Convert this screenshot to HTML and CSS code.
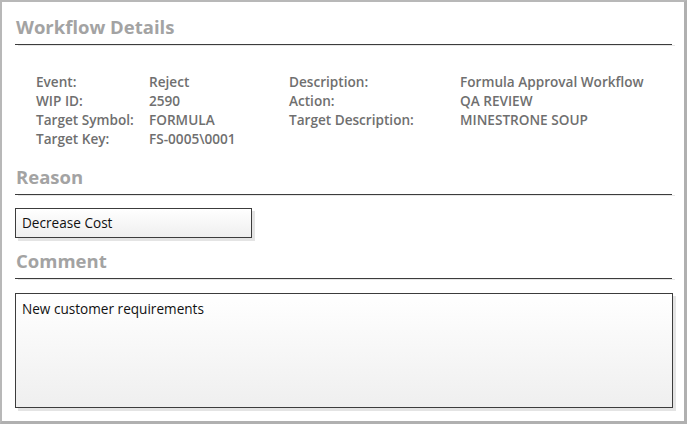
FILE: index.html
```html
<!DOCTYPE html>
<html>
<head>
<meta charset="utf-8">
<link rel="stylesheet" href="styles.css">
</head>
<body>
<div class="frame">
  <h2 class="section-title">Workflow Details</h2>
  <div class="rule"></div>
  <div class="details">
    <div class="label">Event:</div><div class="value">Reject</div>
    <div class="label">Description:</div><div class="value">Formula Approval Workflow</div>
    <div class="label">WIP ID:</div><div class="value">2590</div>
    <div class="label">Action:</div><div class="value">QA REVIEW</div>
    <div class="label">Target Symbol:</div><div class="value">FORMULA</div>
    <div class="label">Target Description:</div><div class="value">MINESTRONE SOUP</div>
    <div class="label">Target Key:</div><div class="value">FS-0005\0001</div>
  </div>
  <h2 class="section-title reason-title">Reason</h2>
  <div class="rule"></div>
  <div class="field reason-field">Decrease Cost</div>
  <h2 class="section-title comment-title">Comment</h2>
  <div class="rule"></div>
  <div class="field comment-field">New customer requirements</div>
</div>
</body>
</html>
```
FILE: styles.css
```css
html, body {
  margin: 0;
  padding: 0;
  background: #ffffff;
}
body {
  width: 687px;
  height: 424px;
  overflow: hidden;
  font-family: "Open Sans", "DejaVu Sans", sans-serif;
}
.frame {
  box-sizing: border-box;
  width: 687px;
  height: 424px;
  border-top: 2px solid #b8b8b8;
  border-left: 2px solid #b8b8b8;
  border-right: 3px solid #b0b0b0;
  border-bottom: 3px solid #b0b0b0;
  padding: 11px 12px 0 13px;
  display: flex;
  flex-direction: column;
}
.section-title {
  margin: 0 0 0 1px;
  font-size: 18.5px;
  font-weight: 700;
  color: #a3a3a3;
  line-height: 27px;
  height: 24px;
  white-space: nowrap;
}
.rule {
  flex: none;
  margin-top: 7px;
  width: 657px;
  height: 1px;
  background: #3c3c3c;
  box-shadow: 3px 1px 0 #e6e6e6;
}
.details {
  flex: none;
  display: grid;
  grid-template-columns: 113px 140px 171px auto;
  grid-auto-rows: 19px;
  padding: 27px 0 0 21px;
  font-size: 13.6px;
  font-weight: 600;
  color: #6f6f6f;
  line-height: 19px;
  height: 76px;
}
.label, .value { white-space: nowrap; }
.reason-title { margin-top: 15px; }
.comment-title { margin-top: 9px; }
.field {
  flex: none;
  box-sizing: border-box;
  border: 1px solid #3c3c3c;
  background: linear-gradient(#ffffff, #efefef);
  box-shadow: 3px 3px 0 #e4e4e4;
  font-size: 13.6px;
  color: #111111;
  padding-left: 6px;
  white-space: nowrap;
}
.reason-field {
  margin-top: 13px;
  width: 237px;
  height: 30px;
  line-height: 27px;
}
.comment-field {
  margin-top: 14px;
  width: 658px;
  height: 115px;
  padding-top: 6px;
  line-height: 18px;
}
```
